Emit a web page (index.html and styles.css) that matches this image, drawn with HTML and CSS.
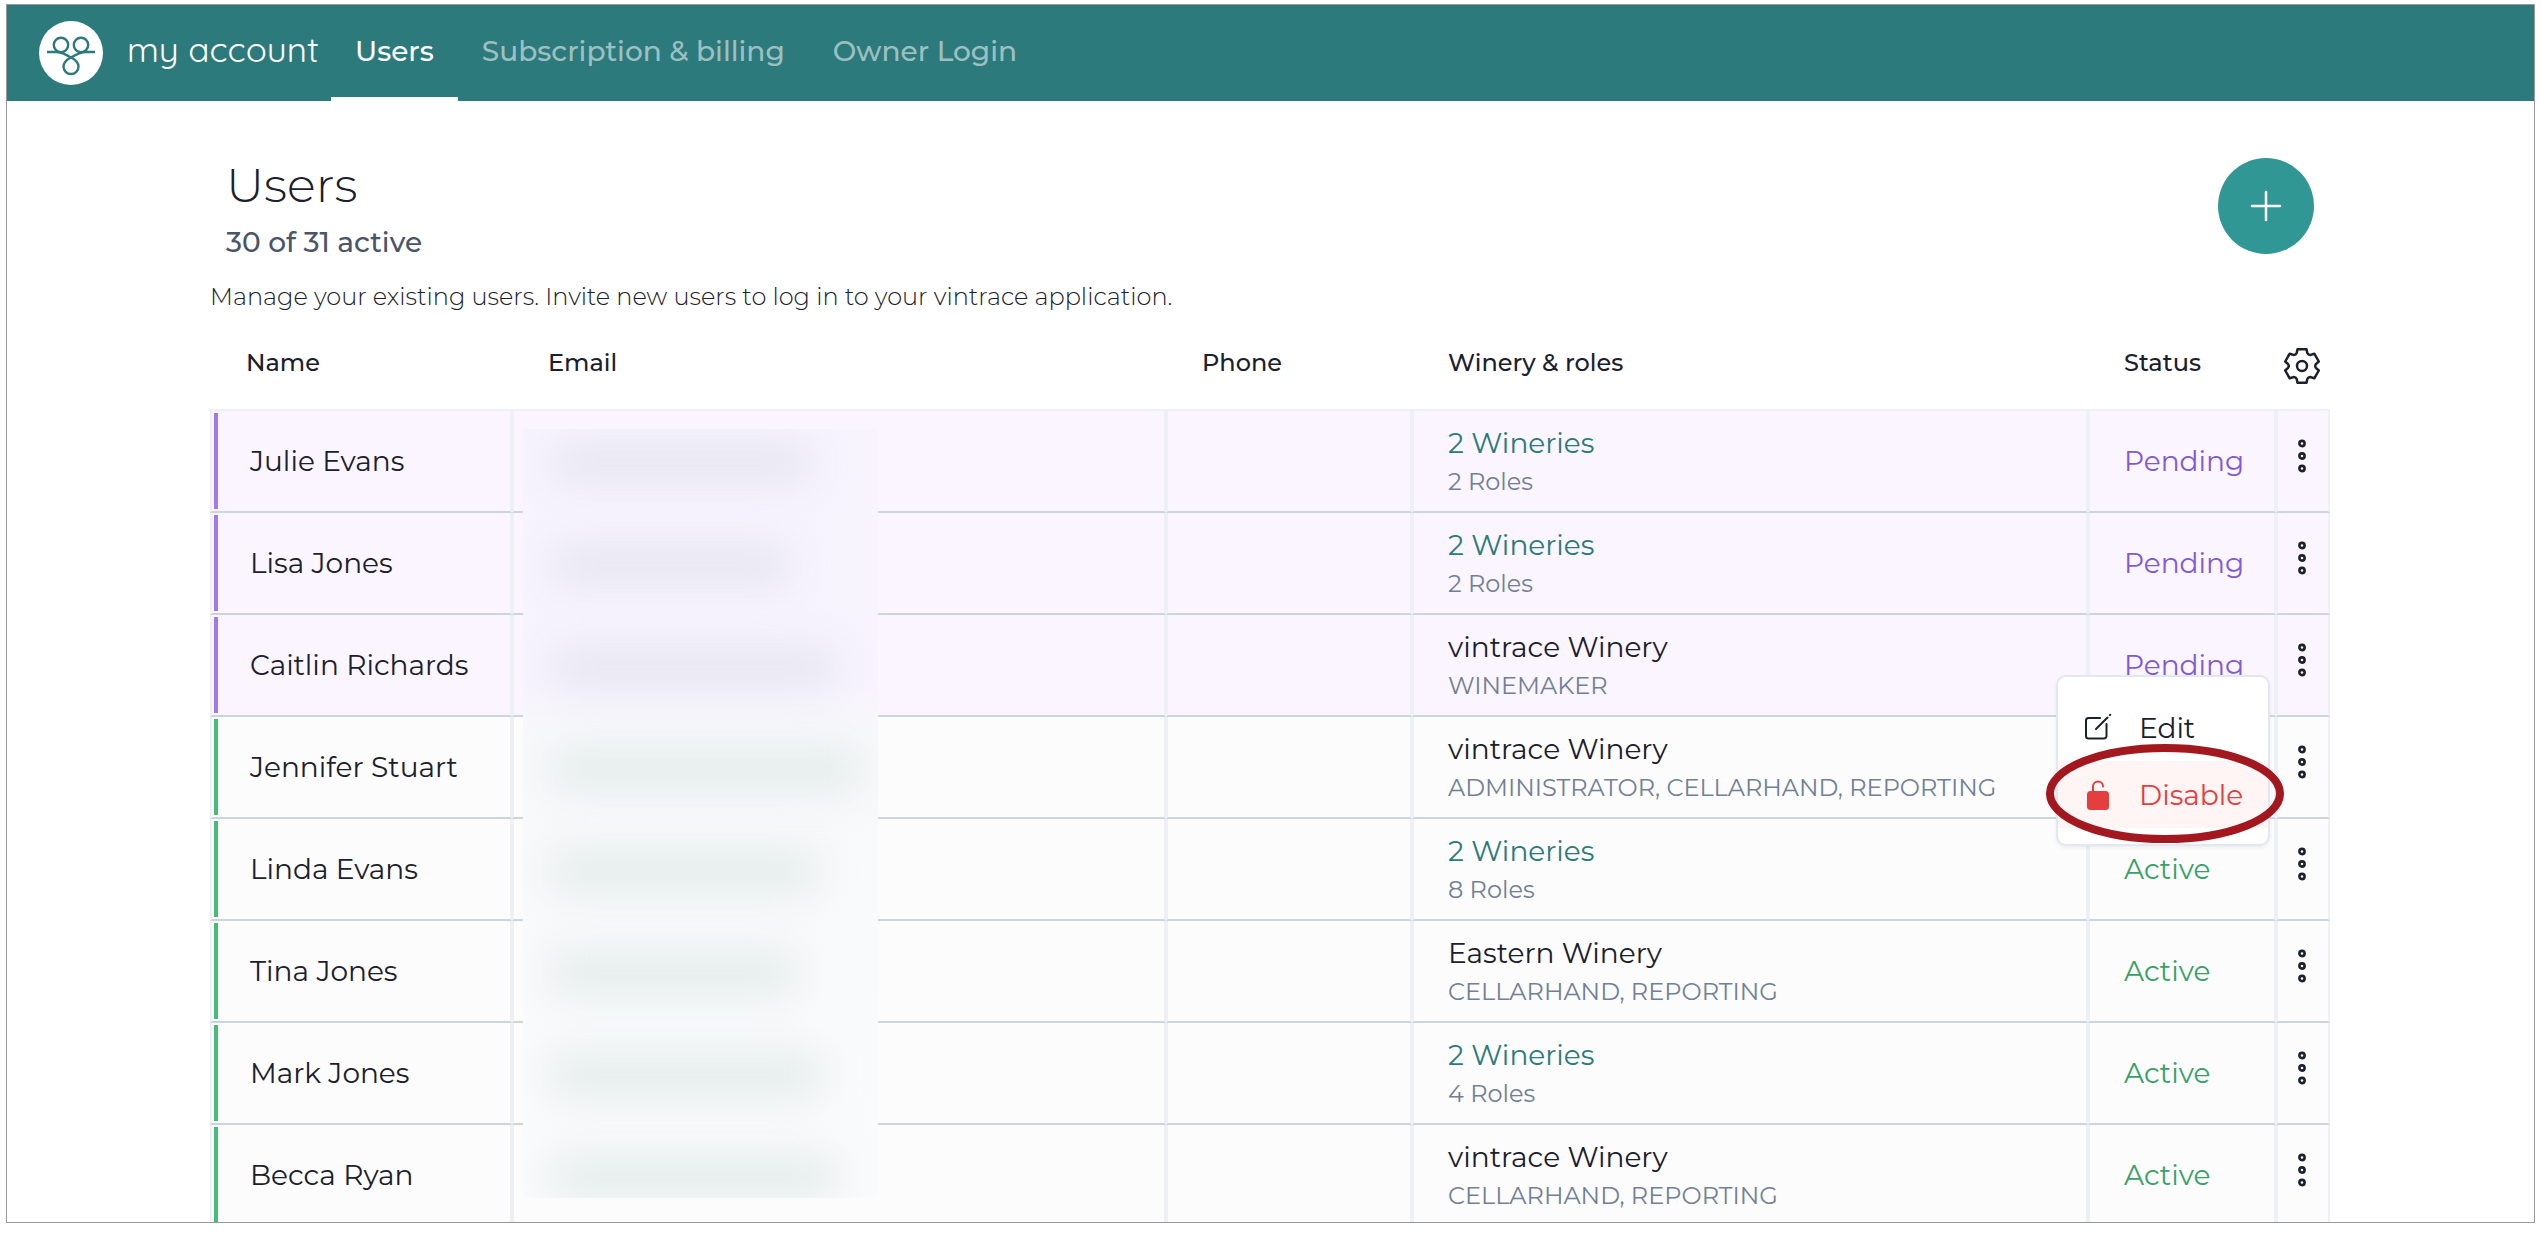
FILE: index.html
```html
<!DOCTYPE html>
<html lang="en">
<head>
<meta charset="utf-8">
<title>My account - Users</title>
<link rel="stylesheet" href="styles.css">
</head>
<body>
<svg class="defs" aria-hidden="true">
  <symbol id="dots" viewBox="0 0 8 34">
    <g fill="none" stroke="currentColor" stroke-width="2.6"><circle cx="4" cy="4.5" r="2.6"/><circle cx="4" cy="17" r="2.6"/><circle cx="4" cy="29.5" r="2.6"/></g>
  </symbol>
</svg>
<div class="app">
  <header class="topbar">
    <a class="brand" href="#">
      <svg class="brand-logo" viewBox="0 0 64 64" aria-hidden="true">
        <circle cx="32" cy="32" r="32" fill="#fff"/>
        <g fill="none" stroke="#2c7a7b" stroke-width="2.4">
          <circle cx="22" cy="24" r="7.2"/><circle cx="42" cy="24" r="7.2"/>
          <path d="M8 31H18C24 31.5 28 34 32 36.5C36 34 40 31.5 46 31H56"/>
          <path d="M32 36.500C27 39 24.500 42 24.500 45.500A7.500 7.500 0 0 0 39.500 45.500C39.500 42 37 39 32 36.500Z"/>
        </g>
      </svg>
      <span class="brand-name">my account</span>
    </a>
    <nav class="tabs">
      <a class="tab tab-active" href="#">Users</a>
      <a class="tab" href="#">Subscription &amp; billing</a>
      <a class="tab" href="#">Owner Login</a>
    </nav>
  </header>
  <main class="content">
    <div class="page-head">
      <div class="page-titles">
        <h1 class="title">Users</h1>
        <p class="subtitle">30 of 31 active</p>
      </div>
      <button class="add-button" type="button" aria-label="Add user">
        <svg class="add-icon" viewBox="0 0 32 32"><path d="M16 2V30M2 16H30" fill="none" stroke="currentColor" stroke-width="2.500" stroke-linecap="round"/></svg>
      </button>
    </div>
    <p class="intro">Manage your existing users. Invite new users to log in to your vintrace application.</p>
    <div class="table-wrap">
      <table class="users">
        <colgroup><col class="col-name"><col><col class="col-phone"><col class="col-winery"><col class="col-status"><col class="col-actions"></colgroup>
        <thead>
          <tr>
            <th scope="col">Name</th><th scope="col">Email</th><th scope="col">Phone</th><th scope="col">Winery &amp; roles</th><th scope="col">Status</th>
            <th scope="col" class="actions"><button class="icon-button" type="button" aria-label="Table settings"><svg class="gear" viewBox="-19 -19 38 38"><path d="M-4.500-16.800L4.500-16.800L5.300-13Q6.300-10.900 8.600-11.100L12.300-12.300L16.800-4.500L13.900-1.900Q12.600 0 13.900 1.900L16.800 4.500L12.300 12.300L8.600 11.100Q6.300 10.900 5.300 13L4.500 16.800L-4.500 16.800L-5.300 13Q-6.300 10.900-8.600 11.100L-12.300 12.300L-16.800 4.500L-13.900 1.900Q-12.600 0-13.900-1.900L-16.800-4.500L-12.300-12.300L-8.600-11.100Q-6.300-10.900-5.300-13Z" fill="none" stroke="currentColor" stroke-width="2.500" stroke-linejoin="round"/><circle r="5" fill="none" stroke="currentColor" stroke-width="2.500"/></svg></button></th>
          </tr>
        </thead>
        <tbody>
          <tr class="pending"><td>Julie Evans</td><td></td><td></td><td><a class="winery" href="#">2 Wineries</a><span class="roles">2 Roles</span></td><td class="status">Pending</td><td class="actions"><button class="icon-button" type="button" aria-label="Actions for Julie Evans"><svg class="dots"><use href="#dots"/></svg></button></td></tr>
          <tr class="pending"><td>Lisa Jones</td><td></td><td></td><td><a class="winery" href="#">2 Wineries</a><span class="roles">2 Roles</span></td><td class="status">Pending</td><td class="actions"><button class="icon-button" type="button" aria-label="Actions for Lisa Jones"><svg class="dots"><use href="#dots"/></svg></button></td></tr>
          <tr class="pending"><td>Caitlin Richards</td><td></td><td></td><td><span class="winery">vintrace Winery</span><span class="roles">WINEMAKER</span></td><td class="status">Pending</td><td class="actions"><button class="icon-button" type="button" aria-label="Actions for Caitlin Richards"><svg class="dots"><use href="#dots"/></svg></button>
            <div class="menu">
              <button class="menu-item" type="button"><svg class="menu-icon" viewBox="0 0 32 32"><g fill="none" stroke="currentColor" stroke-width="2" stroke-linecap="round" stroke-linejoin="round"><path d="M17 6H5.500A2.500 2.500 0 0 0 3 8.500V24A2.500 2.500 0 0 0 5.500 26.500H21A2.500 2.500 0 0 0 23.500 24V12"/><path d="M13 17L24.500 5.500"/><path d="M27 3L27.300 2.700"/></g></svg>Edit</button>
              <button class="menu-item menu-item-danger" type="button"><svg class="menu-icon" viewBox="0 0 32 32"><rect x="4" y="12" width="22" height="19" rx="3.500" fill="currentColor"/><path d="M10 13V7.500A5 5 0 0 1 20 7.500" fill="none" stroke="currentColor" stroke-width="2" stroke-linecap="round"/></svg>Disable</button>
              <svg class="highlight" viewBox="0 0 238 99" aria-hidden="true"><ellipse cx="119" cy="49.500" rx="115" ry="45.500" fill="none" stroke="#a3171e" stroke-width="8"/></svg>
            </div></td></tr>
          <tr><td>Jennifer Stuart</td><td></td><td></td><td><span class="winery">vintrace Winery</span><span class="roles">ADMINISTRATOR, CELLARHAND, REPORTING</span></td><td class="status"></td><td class="actions"><button class="icon-button" type="button" aria-label="Actions for Jennifer Stuart"><svg class="dots"><use href="#dots"/></svg></button></td></tr>
          <tr><td>Linda Evans</td><td></td><td></td><td><a class="winery" href="#">2 Wineries</a><span class="roles">8 Roles</span></td><td class="status">Active</td><td class="actions"><button class="icon-button" type="button" aria-label="Actions for Linda Evans"><svg class="dots"><use href="#dots"/></svg></button></td></tr>
          <tr><td>Tina Jones</td><td></td><td></td><td><span class="winery">Eastern Winery</span><span class="roles">CELLARHAND, REPORTING</span></td><td class="status">Active</td><td class="actions"><button class="icon-button" type="button" aria-label="Actions for Tina Jones"><svg class="dots"><use href="#dots"/></svg></button></td></tr>
          <tr><td>Mark Jones</td><td></td><td></td><td><a class="winery" href="#">2 Wineries</a><span class="roles">4 Roles</span></td><td class="status">Active</td><td class="actions"><button class="icon-button" type="button" aria-label="Actions for Mark Jones"><svg class="dots"><use href="#dots"/></svg></button></td></tr>
          <tr><td>Becca Ryan</td><td></td><td></td><td><span class="winery">vintrace Winery</span><span class="roles">CELLARHAND, REPORTING</span></td><td class="status">Active</td><td class="actions"><button class="icon-button" type="button" aria-label="Actions for Becca Ryan"><svg class="dots"><use href="#dots"/></svg></button></td></tr>
        </tbody>
      </table>
      <div class="redaction" aria-hidden="true">
        <span class="smudge" style="width:260px"></span>
        <span class="smudge" style="width:240px"></span>
        <span class="smudge" style="width:285px"></span>
        <span class="smudge smudge-green" style="width:310px"></span>
        <span class="smudge smudge-green" style="width:265px"></span>
        <span class="smudge smudge-green" style="width:245px"></span>
        <span class="smudge smudge-green" style="width:270px"></span>
        <span class="smudge smudge-green" style="width:285px"></span>
      </div>
    </div>
  </main>
</div>
</body>
</html>
```
FILE: styles.css
```css
* { box-sizing: border-box; }

body {
  margin: 0;
  background: #fff;
  color: #1a202c;
  font-family: Montserrat, Inter, sans-serif;
  font-size: 28px;
  font-weight: 400;
}

button {
  border: 0;
  padding: 0;
  background: none;
  color: inherit;
  font: inherit;
  cursor: pointer;
}

a { color: inherit; text-decoration: none; }

.defs { position: absolute; width: 0; height: 0; }

.app {
  height: calc(100vh - 15px);
  margin: 4px 7px 0 6px;
  border: 1px solid #999;
  overflow: hidden;
}

/* Top bar */
.topbar {
  display: flex;
  height: 96px;
  padding-left: 32px;
  background: #2c7a7b;
  color: #fff;
}

.brand { display: flex; align-items: center; gap: 24px; }
.brand-logo { width: 64px; height: 64px; }
.brand-name {
  width: 204px;
  padding-bottom: 8px;
  font-family: Quicksand, Lato, sans-serif;
  font-size: 35px;
  font-weight: 400;
  line-height: 48px;
  white-space: nowrap;
}

.tabs { display: flex; }
.tab {
  padding: 0 24px;
  border-bottom: 4px solid transparent;
  color: rgba(255, 255, 255, 0.55);
  font-size: 28px;
  font-weight: 500;
  line-height: 92px;
  white-space: nowrap;
}
.tab-active { border-color: #fff; color: #fff; }

/* Page heading */
.content { padding: 52px 204px 0 203px; }
.page-head { display: flex; justify-content: space-between; align-items: flex-start; }
.page-titles { padding-left: 16px; }
.title { margin: 0; font-size: 48px; font-weight: 300; line-height: 64px; }
.subtitle { margin: 0; color: #4a5568; font-size: 28px; font-weight: 500; line-height: 50px; }
.intro { margin: 12px 0 10px; font-size: 24px; font-weight: 300; line-height: 36px; }

.add-button {
  display: flex;
  align-items: center;
  justify-content: center;
  width: 96px;
  height: 96px;
  margin: 5px 16px 0 0;
  border-radius: 50%;
  background: #319795;
  color: #fff;
}
.add-icon { width: 32px; height: 32px; }

/* Users table */
.table-wrap { position: relative; }
.users {
  width: 100%;
  border-collapse: separate;
  border-spacing: 0;
  table-layout: fixed;
}
.col-name { width: 302px; }
.col-phone { width: 246px; }
.col-winery { width: 676px; }
.col-status { width: 188px; }
.col-actions { width: 54px; }

th {
  height: 84px;
  padding: 0 36px 10px;
  font-size: 24px;
  font-weight: 500;
  text-align: left;
}

td {
  height: 102px;
  padding: 0 34px;
  border: 0 solid #edf0f4;
  border-width: 0 2px 2px;
  border-bottom-color: #cbd5e0;
  background: #fcfcfc;
  white-space: nowrap;
}
tbody tr:first-child td { height: 104px; border-top-width: 2px; }
.pending td { background: #faf5ff; }
td:first-child {
  padding-left: 38px;
  background: linear-gradient(#48bb78, #48bb78) 2px 2px / 4px calc(100% - 4px) no-repeat #fcfcfc;
}
.pending td:first-child {
  background: linear-gradient(#9f7aea, #9f7aea) 2px 2px / 4px calc(100% - 4px) no-repeat #faf5ff;
}

.winery { display: block; line-height: 42px; }
a.winery { color: #2c7a7b; }
.roles { display: block; color: #718096; font-size: 24px; line-height: 36px; }
.status { color: #38a169; }
.pending .status { color: #805ad5; }

.actions { padding: 0 2px 2px 0; text-align: center; }
td.actions { position: relative; }
.icon-button { display: block; margin: 0 auto; }
.gear { display: block; width: 38px; height: 38px; }
td .icon-button { padding: 0 8px 8px; }
.dots { display: block; width: 8px; height: 34px; }

/* Row menu */
.menu {
  position: absolute;
  z-index: 2;
  top: 60px;
  right: 58px;
  width: 214px;
  padding: 17px 0 16px;
  border: 2px solid #e2e8f0;
  border-radius: 10px;
  background: #fff;
  box-shadow: 0 2px 4px rgba(0, 0, 0, 0.06);
}
.menu-item {
  display: flex;
  align-items: center;
  gap: 24px;
  width: 100%;
  height: 67px;
  padding-left: 25px;
}
.menu-item-danger { background: #fff5f5; color: #e53e3e; }
.menu-icon { width: 32px; height: 32px; }
.highlight { position: absolute; top: 67px; left: -12px; width: 238px; height: 99px; }

/* Obscured e-mail addresses */
.redaction {
  position: absolute;
  top: 104px;
  left: 313px;
  display: grid;
  grid-auto-rows: 102px;
  width: 355px;
  height: 769px;
  overflow: hidden;
  background: linear-gradient(#f8f4fe 0 255px, #f8f9fb 310px, #fafbfc);
}
.smudge { height: 44px; margin: 12px 0 0 28px; background: #e6e6f1; filter: blur(20px); }
.smudge-green { background: #e4eceb; }
```
